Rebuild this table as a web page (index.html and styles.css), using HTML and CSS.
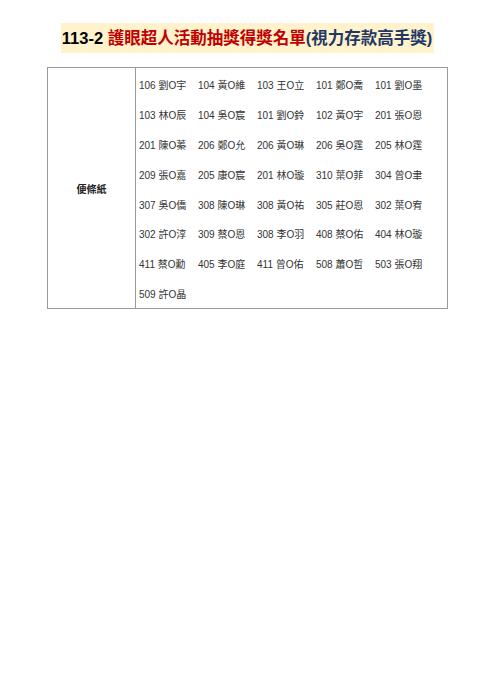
FILE: index.html
```html
<!DOCTYPE html>
<html lang="zh-Hant">
<head>
<meta charset="utf-8">
<title>113-2 護眼超人活動抽獎得獎名單</title>
<link rel="stylesheet" href="styles.css">
</head>
<body>
<div class="page">
  <div class="title-row">
    <h1 class="title"><span class="t-num">113-2 </span><span class="t-red">護眼超人活動抽獎得獎名單</span><span class="t-blue">(視力存款高手獎)</span></h1>
  </div>
  <div class="list">
    <div class="cat">便條紙</div>
    <div class="names">
      <span>106 劉O宇</span><span>104 黃O維</span><span>103 王O立</span><span>101 鄭O喬</span><span>101 劉O墨</span>
      <span>103 林O辰</span><span>104 吳O宸</span><span>101 劉O鈴</span><span>102 黃O宇</span><span>201 張O恩</span>
      <span>201 陳O蓁</span><span>206 鄭O允</span><span>206 黃O琳</span><span>206 吳O霆</span><span>205 林O霆</span>
      <span>209 張O嘉</span><span>205 康O宸</span><span>201 林O璇</span><span>310 葉O菲</span><span>304 曾O聿</span>
      <span>307 吳O僑</span><span>308 陳O琳</span><span>308 黃O祐</span><span>305 莊O恩</span><span>302 葉O宥</span>
      <span>302 許O淳</span><span>309 蔡O恩</span><span>308 李O羽</span><span>408 蔡O佑</span><span>404 林O璇</span>
      <span>411 蔡O勳</span><span>405 李O庭</span><span>411 曾O佑</span><span>508 蕭O哲</span><span>503 張O翔</span>
      <span>509 許O晶</span>
    </div>
  </div>
</div>
</body>
</html>
```
FILE: styles.css
```css
html, body {
  margin: 0;
  padding: 0;
  background: #ffffff;
}
body {
  font-family: "Liberation Sans", "Noto Sans CJK TC", sans-serif;
  color: #333333;
}
.page {
  padding-top: 23px;
}
.title-row {
  display: flex;
  justify-content: center;
}
.title {
  margin: 0;
  background: #fff2cc;
  font-size: 16.5px;
  line-height: 30px;
  font-weight: bold;
  padding: 0 2px 0 1px;
}
.t-num { color: #000000; }
.t-red { color: #c00000; }
.t-blue { color: #1f3864; }
.list {
  margin: 14px 0 0 47px;
  width: 401px;
  box-sizing: border-box;
  border: 1px solid #9a9a9a;
  display: grid;
  grid-template-columns: 88px 1fr;
}
.cat {
  border-right: 1px solid #9a9a9a;
  display: flex;
  align-items: center;
  justify-content: center;
  font-size: 10px;
  font-weight: bold;
  color: #222222;
}
.names {
  padding: 2px 0 0 3px;
  display: grid;
  grid-template-columns: repeat(5, 59px);
  grid-auto-rows: 29.8px;
  align-items: center;
  font-size: 10px;
  color: #333333;
}
.names span {
  white-space: nowrap;
}
```
